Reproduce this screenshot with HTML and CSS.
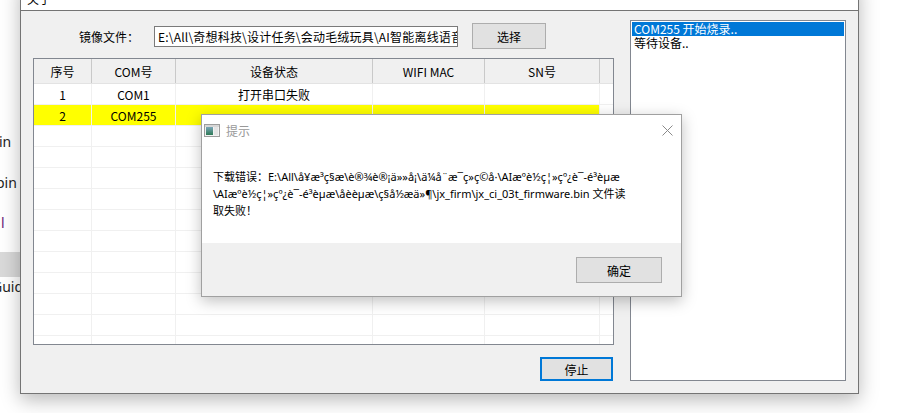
FILE: index.html
```html
<!DOCTYPE html>
<html lang="zh">
<head>
<meta charset="utf-8">
<title>烧录工具</title>
<link rel="stylesheet" href="styles.css">
</head>
<body>
<div class="desk">
  <div class="bgapp">
    <div class="bgline l1">in</div>
    <div class="bgline l2">pin</div>
    <div class="bgline l3">l</div>
    <div class="bgbar"></div>
    <div class="bgline l4">Guid</div>
  </div>

  <div class="win">
    <div class="titlebar"><span class="title">关于</span></div>
    <div class="client">
      <div class="leftcol">
        <div class="toprow">
          <span class="label">镜像文件：</span>
          <div class="input"><span class="input-text">E:\All\奇想科技\设计任务\会动毛绒玩具\AI智能离线语音资料</span></div>
          <div class="btn choose">选择</div>
        </div>
        <div class="list">
          <div class="hdr">
            <div class="hcell">序号</div>
            <div class="hcell">COM号</div>
            <div class="hcell">设备状态</div>
            <div class="hcell">WIFI MAC</div>
            <div class="hcell">SN号</div>
            <div class="hcell filler"></div>
          </div>
          <div class="row">
            <div class="cell">1</div><div class="cell">COM1</div><div class="cell">打开串口失败</div><div class="cell"></div><div class="cell"></div><div class="cell filler"></div>
          </div>
          <div class="row hl">
            <div class="cell">2</div><div class="cell">COM255</div><div class="cell"></div><div class="cell"></div><div class="cell"></div><div class="cell filler"></div>
          </div>
          <div class="row"><div class="cell"></div><div class="cell"></div><div class="cell"></div><div class="cell"></div><div class="cell"></div><div class="cell filler"></div></div>
          <div class="row"><div class="cell"></div><div class="cell"></div><div class="cell"></div><div class="cell"></div><div class="cell"></div><div class="cell filler"></div></div>
          <div class="row"><div class="cell"></div><div class="cell"></div><div class="cell"></div><div class="cell"></div><div class="cell"></div><div class="cell filler"></div></div>
          <div class="row"><div class="cell"></div><div class="cell"></div><div class="cell"></div><div class="cell"></div><div class="cell"></div><div class="cell filler"></div></div>
          <div class="row"><div class="cell"></div><div class="cell"></div><div class="cell"></div><div class="cell"></div><div class="cell"></div><div class="cell filler"></div></div>
          <div class="row"><div class="cell"></div><div class="cell"></div><div class="cell"></div><div class="cell"></div><div class="cell"></div><div class="cell filler"></div></div>
          <div class="row"><div class="cell"></div><div class="cell"></div><div class="cell"></div><div class="cell"></div><div class="cell"></div><div class="cell filler"></div></div>
          <div class="row"><div class="cell"></div><div class="cell"></div><div class="cell"></div><div class="cell"></div><div class="cell"></div><div class="cell filler"></div></div>
          <div class="row"><div class="cell"></div><div class="cell"></div><div class="cell"></div><div class="cell"></div><div class="cell"></div><div class="cell filler"></div></div>
          <div class="row"><div class="cell"></div><div class="cell"></div><div class="cell"></div><div class="cell"></div><div class="cell"></div><div class="cell filler"></div></div>
          <div class="row"><div class="cell"></div><div class="cell"></div><div class="cell"></div><div class="cell"></div><div class="cell"></div><div class="cell filler"></div></div>
        </div>
        <div class="bottomrow"><div class="btn stop">停止</div></div>
      </div>
      <div class="log">
        <div class="item sel">COM255 开始烧录..</div>
        <div class="item">等待设备..</div>
      </div>
    </div>
  </div>

  <div class="dlg">
    <div class="dlg-title">
      <svg class="dlg-icon" width="16" height="13" viewBox="0 0 16 13">
        <defs>
          <linearGradient id="ig" x1="0" y1="0" x2="0" y2="1">
            <stop offset="0" stop-color="#7aa6b8"/>
            <stop offset="1" stop-color="#2e7a55"/>
          </linearGradient>
        </defs>
        <rect x="0.5" y="0.5" width="15" height="12" fill="#f2f2f2" stroke="#9c9c9c"/>
        <rect x="1" y="1" width="14" height="2" fill="#d6d6d6"/>
        <rect x="2" y="3" width="7" height="8" fill="url(#ig)"/>
        <rect x="10" y="3" width="4" height="8" fill="#e4e4e4"/>
      </svg>
      <span class="dlg-caption">提示</span>
      <svg class="dlg-close" width="11" height="11" viewBox="0 0 11 11">
        <path d="M0.5 0.5 L10.5 10.5 M10.5 0.5 L0.5 10.5" stroke="#8a8a8a" stroke-width="1" fill="none"/>
      </svg>
    </div>
    <div class="dlg-body">
      <div class="msg">下载错误：E:\All\å¥æ³ç§æ\è®¾è®¡ä»»å¡\ä¼å¨æ¯ç»ç©å·\AIæºè½ç¦»çº¿è¯-é³èµæ<br>\AIæºè½ç¦»çº¿è¯-é³èµæ\åèèµæ\ç§å½æä»¶\jx_firm\jx_ci_03t_firmware.bin 文件读<br>取失败！</div>
    </div>
    <div class="dlg-foot"><div class="btn ok">确定</div></div>
  </div>
</div>
</body>
</html>
```

FILE: styles.css
```css
* { box-sizing: border-box; margin: 0; padding: 0; }
html, body { width: 904px; height: 413px; overflow: hidden; background: #fff; }
body {
  font-family: "Noto Sans CJK SC", "Noto Sans", sans-serif;
  font-size: 12px;
  color: #000;
}
.desk { position: relative; width: 904px; height: 413px; overflow: hidden; background: #fff; }

/* background application strip */
.bgapp {
  position: absolute; left: 0; top: 0; width: 20px; height: 413px;
  overflow: hidden; display: flex; flex-direction: column;
  font-family: "Noto Sans", sans-serif; font-size: 14px; color: #1e1e1e;
}
.bgline { height: 18px; line-height: 18px; white-space: nowrap; }
.l1 { margin-top: 133px; margin-left: -1px; }
.l2 { margin-top: 23px; margin-left: -4px; }
.l3 { margin-top: 22px; margin-left: 1px; color: #68217a; }
.bgbar { margin-top: 20px; height: 25px; background: #d9d9d9; }
.l4 { margin-top: 1px; margin-left: -8px; }

/* main window */
.win {
  position: absolute; left: 20px; top: -20px; width: 839px; height: 414px;
  border: 1px solid #747474; background: #f0f0f0;
  box-shadow: 0 6px 18px rgba(0,0,0,0.28);
  display: flex; flex-direction: column;
}
.titlebar {
  height: 30px; background: #fff; border-bottom: 1px solid #747474;
  padding: 12px 0 0 6px; overflow: hidden;
}
.title { display: block; line-height: 12px; font-size: 12px; color: #000; }
.client { flex: 1; display: flex; align-items: flex-start; }

.leftcol { margin-left: 12px; margin-top: 12px; width: 581px; display: flex; flex-direction: column; }
.toprow { height: 26px; display: flex; align-items: center; }
.label { margin-left: 46px; width: 75px; white-space: nowrap; }
.input {
  width: 304px; height: 21px; background: #fff; border: 1px solid #7a7a7a;
  padding-left: 3px; overflow: hidden; white-space: nowrap; line-height: 19px;
  letter-spacing: 0.2px;
}
.btn {
  background: #e1e1e1; border: 1px solid #adadad;
  display: flex; align-items: center; justify-content: center;
}
.choose { margin-left: 14px; width: 74px; height: 26px; }

.list {
  margin-top: 9px; width: 581px; height: 287px; overflow: hidden;
  border: 1px solid #828790; background: #fff;
}
.hdr, .row { display: grid; grid-template-columns: 58px 84px 197px 112px 115px 1fr; }
.hdr { height: 25px; background: #f0f0f0; border-bottom: 1px solid #e3e3e3; }
.hcell {
  display: flex; align-items: center; justify-content: center;
  border-right: 1px solid #c9c9c9; color: #000;
}
.hcell.filler { border-right: none; }
.row { height: 21px; border-bottom: 1px solid #f0f0f0; }
.cell {
  display: flex; align-items: center; justify-content: center;
  border-right: 1px solid #f0f0f0;
}
.cell.filler { border-right: none; }
.row.hl .cell { background: #ffff00; }
.row.hl .cell.filler { background: #fff; }

.bottomrow { margin-top: 12px; display: flex; justify-content: flex-end; padding-right: 1px; }
.stop { width: 73px; height: 24px; border: 2px solid #0078d7; }

.log {
  margin-left: 16px; margin-top: 9px; width: 216px; height: 361px;
  border: 1px solid #828790; background: #fff; padding: 1px;
  overflow: hidden;
}
.item { height: 14px; line-height: 14px; padding-left: 2px; white-space: nowrap; overflow: hidden; }
.item.sel { background: #0078d7; color: #fff; }

/* message dialog */
.dlg {
  position: absolute; left: 201px; top: 114px; width: 481px; height: 183px;
  border: 1px solid #a0a0a0; background: #fff;
  box-shadow: 0 4px 14px rgba(0,0,0,0.25);
  display: flex; flex-direction: column;
}
.dlg-title { height: 30px; display: flex; align-items: center; padding-left: 2px; padding-right: 8px; }
.dlg-icon { flex: none; }
.dlg-caption { margin-left: 6px; color: #999; flex: 1; }
.dlg-close { flex: none; }
.dlg-body { flex: 1; background: #fff; padding: 23px 0 0 11px; overflow: hidden; }
.msg {
  font-family: "Noto Sans", "Noto Sans CJK SC", sans-serif;
  font-size: 11px; line-height: 17px; white-space: nowrap; color: #000;
}
.dlg-foot {
  height: 53px; background: #f0f0f0; display: flex; justify-content: flex-end;
  align-items: flex-start; padding: 14px 19px 0 0;
}
.ok { width: 86px; height: 26px; }
```
